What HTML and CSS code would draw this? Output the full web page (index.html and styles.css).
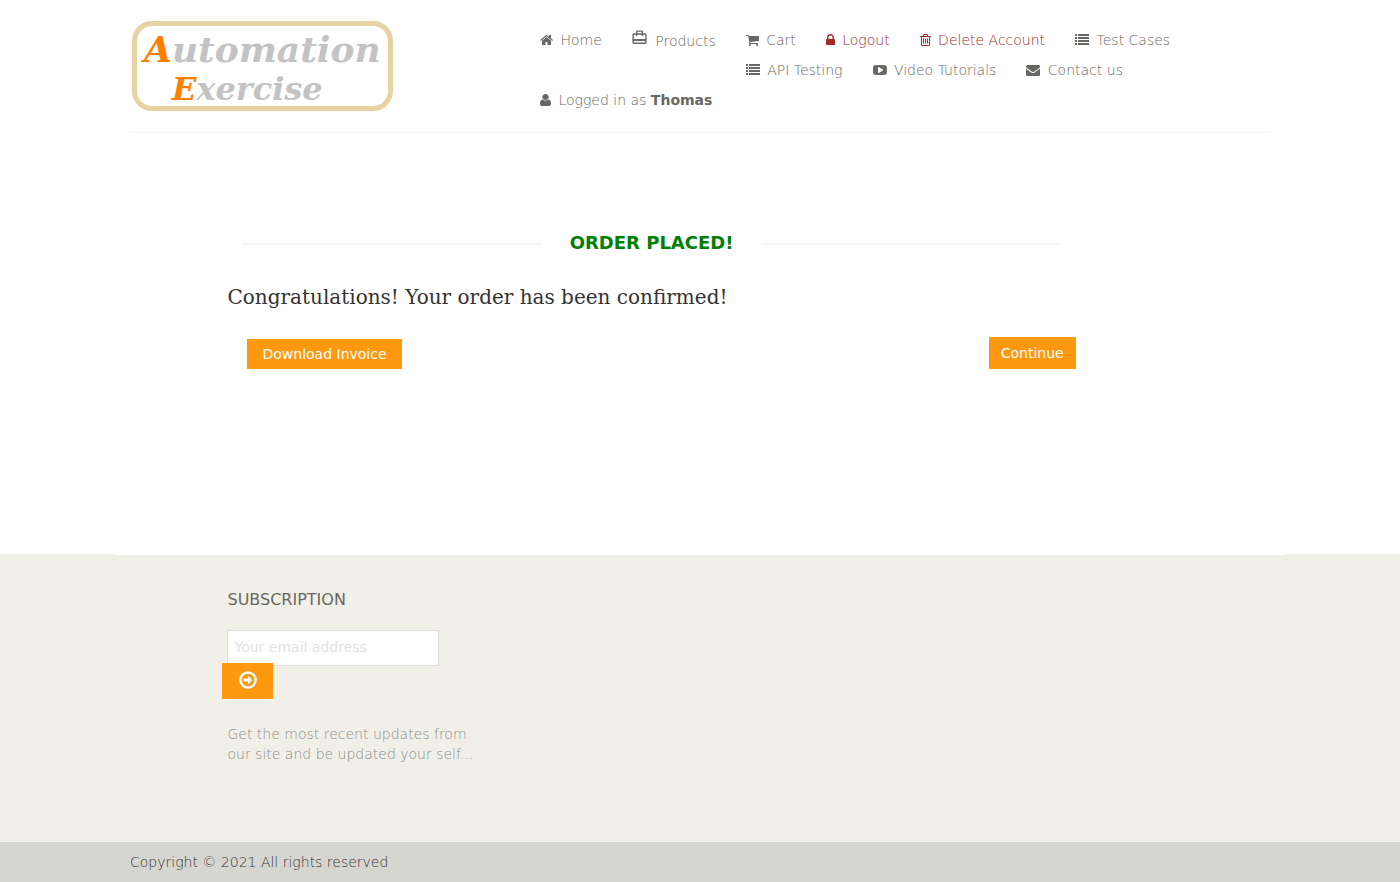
FILE: index.html
```html
<!DOCTYPE html>
<html lang="en">
<head>
<meta charset="utf-8">
<title>Automation Exercise - Order Placed</title>
<link rel="stylesheet" href="styles.css">
</head>
<body>
<header class="container">
  <div class="header-row">
    <a class="logo" href="#" aria-label="Automation Exercise">
      <span class="logo-line"><b>A</b>utomation</span>
      <span class="logo-line logo-second"><b>E</b>xercise</span>
    </a>
    <nav class="menu">
      <ul>
        <li><a href="#"><svg class="icon" width="13" height="14" viewBox="64 0 1664 1792"><path d="M1472 992v480q0 26-19 45t-45 19h-384v-384h-256v384h-384q-26 0-45-19t-19-45v-480q0-1 .5-3t.5-3l575-474 575 474q1 2 1 6zm223-69l-62 74q-8 9-21 11h-3q-13 0-21-7l-692-577-692 577q-12 8-24 7-13-2-21-11l-62-74q-8-10-7-23.5t11-21.5l719-599q32-26 76-26t76 26l244 204v-195q0-14 9-23t23-9h192q14 0 23 9t9 23v408l219 182q10 8 11 21.5t-7 23.5z"/></svg> Home</a></li>
        <li class="tall"><a href="#"><svg class="icon travel" width="17" height="17" viewBox="0 0 24 24"><path d="M20 6h-3V4c0-1.11-.89-2-2-2H9c-1.11 0-2 .89-2 2v2H4c-1.11 0-2 .89-2 2v11c0 1.11.89 2 2 2h16c1.11 0 2-.89 2-2V8c0-1.11-.89-2-2-2zM9 4h6v2H9V4zm11 15H4v-2h16v2zm0-5H4V8h3v2h2V8h6v2h2V8h3v6z"/></svg> Products</a></li>
        <li><a href="#"><svg class="icon" width="13" height="14" viewBox="64 0 1664 1792"><path d="M704 1536q0 52-38 90t-90 38-90-38-38-90 38-90 90-38 90 38 38 90zm896 0q0 52-38 90t-90 38-90-38-38-90 38-90 90-38 90 38 38 90zm128-1088v512q0 24-16.5 42.5t-40.5 21.5l-1044 122q13 60 13 70 0 16-24 64h920q26 0 45 19t19 45-19 45-45 19h-1024q-26 0-45-19t-19-45q0-11 8-31.5t16-36 21.5-40 15.5-29.5l-177-823h-204q-26 0-45-19t-19-45 19-45 45-19h256q16 0 28.5 6.5t19.5 15.5 13 24.5 8 26 5.5 29.5 4.5 26h1201q26 0 45 19t19 45z"/></svg> Cart</a></li>
        <li><a class="danger" href="#"><svg class="icon" width="9" height="14" viewBox="320 0 1152 1792"><path d="M640 768h512v-192q0-106-75-181t-181-75-181 75-75 181v192zm832 96v576q0 40-28 68t-68 28h-960q-40 0-68-28t-28-68v-576q0-40 28-68t68-28h32v-192q0-184 132-316t316-132 316 132 132 316v192h32q40 0 68 28t28 68z"/></svg> Logout</a></li>
        <li><a class="danger" href="#"><svg class="icon" width="11" height="14" viewBox="192 0 1408 1792"><path d="M704 736v576q0 14-9 23t-23 9h-64q-14 0-23-9t-9-23v-576q0-14 9-23t23-9h64q14 0 23 9t9 23zm256 0v576q0 14-9 23t-23 9h-64q-14 0-23-9t-9-23v-576q0-14 9-23t23-9h64q14 0 23 9t9 23zm256 0v576q0 14-9 23t-23 9h-64q-14 0-23-9t-9-23v-576q0-14 9-23t23-9h64q14 0 23 9t9 23zm128 724v-948h-896v948q0 22 7 40.5t14.5 27 10.5 8.5h832q3 0 10.5-8.5t14.5-27 7-40.5zm-672-1076h448l-48-117q-7-9-17-11h-317q-10 2-17 11zm928 32v64q0 14-9 23t-23 9h-96v948q0 83-47 143.5t-113 60.5h-832q-66 0-113-58.5t-47-141.5v-952h-96q-14 0-23-9t-9-23v-64q0-14 9-23t23-9h309l70-167q15-37 54-63t79-26h320q40 0 79 26t54 63l70 167h309q14 0 23 9t9 23z"/></svg> Delete Account</a></li>
        <li><a href="#"><svg class="icon" width="14" height="14" viewBox="0 0 14 14"><path d="M0 1h2v2H0zM3 1h11v2H3zM0 4h2v2H0zM3 4h11v2H3zM0 7h2v2H0zM3 7h11v2H3zM0 10h2v2H0zM3 10h11v2H3z"/></svg> Test Cases</a></li>
        <li><a href="#"><svg class="icon" width="14" height="14" viewBox="0 0 14 14"><path d="M0 1h2v2H0zM3 1h11v2H3zM0 4h2v2H0zM3 4h11v2H3zM0 7h2v2H0zM3 7h11v2H3zM0 10h2v2H0zM3 10h11v2H3z"/></svg> API Testing</a></li>
        <li><a href="#"><svg class="icon" width="14" height="14" viewBox="0 0 1792 1792"><path d="M1280 896q0-37-30-54l-512-320q-31-20-65-2-33 18-33 56v640q0 38 33 56 16 8 31 8 20 0 34-10l512-320q30-17 30-54zm512 0q0 96-1 150t-8.500 136.500-22.500 147.500q-16 73-69 123t-124 58q-222 25-671 25t-671-25q-71-8-124.500-58t-69.500-123q-14-65-21.500-147.500t-8.500-136.500-1-150 1-150 8.500-136.500 22.500-147.500q16-73 69-123t124-58q222-25 671-25t671 25q71 8 124.500 58t69.500 123q14 65 21.500 147.500t8.500 136.500 1 150z"/></svg> Video Tutorials</a></li>
        <li><a href="#"><svg class="icon" width="14" height="14" viewBox="0 0 1792 1792"><path d="M1792 710v794q0 66-47 113t-113 47h-1472q-66 0-113-47t-47-113v-794q44 49 101 87 362 246 497 345 57 42 92.500 65.500t94.500 48 110 24.500h2q51 0 110-24.500t94.500-48 92.500-65.500q170-123 498-345 57-39 100-87zm0-294q0 79-49 151t-122 123q-376 261-468 325-10 7-42.500 31t-54 38-52 32.500-57.500 27-50 9h-2q-23 0-50-9t-57.500-27-52-32.500-54-38-42.500-31q-91-64-262-182.500t-205-142.500q-62-42-117-115.500t-55-136.500q0-78 41.500-130t118.500-52h1472q65 0 112.500 47t47.500 113z"/></svg> Contact us</a></li>
        <li><a href="#"><svg class="icon" width="11" height="14" viewBox="256 0 1280 1792" preserveAspectRatio="none"><path d="M1536 1399q0 109-62.500 187t-150.500 78h-854q-88 0-150.500-78t-62.500-187q0-85 8.500-160.500t31.500-152 58.500-131 94-89 134.500-34.500q131 128 313 128t313-128q76 0 134.500 34.500t94 89 58.500 131 31.500 152 8.500 160.500zm-256-887q0 159-112.500 271.500t-271.500 112.500-271.500-112.500-112.500-271.500 112.500-271.500 271.500-112.500 271.500 112.500 112.500 271.500z"/></svg> Logged in as <b>Thomas</b></a></li>
      </ul>
    </nav>
  </div>
</header>

<main class="container">
  <section class="order">
    <h2 class="title">Order Placed!</h2>
    <p class="message">Congratulations! Your order has been confirmed!</p>
    <div class="actions">
      <a class="button download" href="#">Download Invoice</a>
      <a class="button continue" href="#">Continue</a>
    </div>
  </section>
</main>

<footer>
  <div class="footer-top">
    <div class="container notch">
      <div class="subscribe">
        <h2>Subscription</h2>
        <form>
          <input type="email" placeholder="Your email address" aria-label="Your email address">
          <button type="button" aria-label="Subscribe"><svg width="18" height="18" viewBox="0 0 18 18"><circle cx="9" cy="9" r="7.600" fill="none" stroke="#fff" stroke-width="2.500"/><path d="M4.500 7.500h4.500V4.700L13.300 9 9 13.300v-2.800H4.500z" fill="#fff"/></svg></button>
          <p>Get the most recent updates from <br>our site and be updated your self...</p>
        </form>
      </div>
    </div>
  </div>
  <div class="footer-bottom">
    <p class="container">Copyright © 2021 All rights reserved</p>
  </div>
</footer>
</body>
</html>
```
FILE: styles.css
```css
* { box-sizing: border-box; }

body {
  margin: 0;
  min-height: 100vh;
  display: flex;
  flex-direction: column;
  background: #fefefe;
  color: #696763;
  font: 300 14px/20px "DejaVu Sans", sans-serif;
}

h2, p, ul { margin: 0; padding: 0; }
a { color: inherit; text-decoration: none; }

.container {
  width: 100%;
  max-width: 1170px;
  margin: 0 auto;
  padding: 0 15px;
}

.header-row {
  display: grid;
  grid-template-columns: 410px 1fr;
  align-items: start;
  padding: 20px 0 21px;
  border-bottom: 1px solid #f5f5f5;
}

.logo {
  justify-self: start;
  width: 261px;
  height: 90px;
  margin: 1px 2px 0;
  padding: 2px 0 0 7px;
  border: 5px solid #e6d2a2;
  border-radius: 20px;
  background: #fff;
  color: #c3c3c3;
  font: italic 700 36px/42px "DejaVu Serif", serif;
}

.logo-line { display: block; white-space: nowrap; }
.logo-line b { color: #ff8000; }
.logo-second { padding-left: 28px; font-size: 32px; line-height: 38px; }

.menu ul { list-style: none; display: flow-root; }
.menu li { float: left; padding: 10px 30px 0 0; }
.menu li:nth-child(6), .menu li:last-child { padding-right: 0; }
.menu a { display: flex; align-items: center; white-space: pre; }
.menu .tall { padding-top: 9px; margin-left: -1px; }
.menu b { font-weight: 700; }
.danger { color: brown; }
.icon { fill: currentColor; margin-right: 3px; }
.travel { margin-bottom: 6px; }

.order {
  width: 74.4%;
  margin-left: 8.55%;
  margin-top: 98px;
  padding-bottom: 185px;
}

.title {
  display: flex;
  align-items: center;
  gap: 28px;
  margin: 0 15px;
  color: green;
  font-size: 18px;
  line-height: 24px;
  font-weight: 700;
  text-transform: uppercase;
}

.title::before, .title::after {
  content: "";
  flex: 1;
  height: 2px;
  margin-top: 2px;
  background: #f4f4f4;
}

.message {
  margin-top: 28px;
  color: #333;
  font: 400 20px/28px "DejaVu Serif", serif;
}

.actions {
  display: flex;
  justify-content: space-between;
  align-items: flex-end;
  margin-top: 26px;
}

.button {
  background: #fe980f;
  color: #fff;
  font-weight: 400;
}

.download { margin-left: 20px; padding: 5px 15px; }
.continue { padding: 6px 12px; }

footer { flex: 1; display: flex; flex-direction: column; }
.footer-top { flex: 1; background: #f0f0e9; }
.notch { border-top: 1px solid #fefefe; }

.subscribe { margin-left: 8.55%; padding: 35px 0 78px; }
.subscribe h2 {
  font-size: 16px;
  line-height: 20px;
  font-weight: 400;
  text-transform: uppercase;
}
.subscribe form {
  display: flex;
  flex-direction: column;
  align-items: flex-start;
  margin-top: 20px;
}
.subscribe input {
  width: 212px;
  height: 36px;
  padding: 0 6px 2px;
  border: 1px solid #ddd;
  background: #fff;
  color: #696763;
  font: 400 14px/20px "DejaVu Sans", sans-serif;
}
.subscribe input::placeholder { color: #e3e3df; }
.subscribe button {
  display: flex;
  justify-content: center;
  width: 51px;
  height: 36px;
  margin: -3px 0 25px -5px;
  padding: 8px 0 0;
  border: 0;
  background: #fe980f;
}
.subscribe p { color: #8c8c88; }

.footer-bottom { padding: 10px 0; background: #d6d6d0; color: #363432; }
```
